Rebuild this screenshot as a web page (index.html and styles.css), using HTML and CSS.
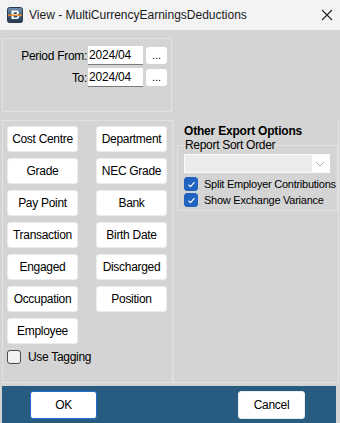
FILE: index.html
```html
<!DOCTYPE html>
<html lang="en">
<head>
  <meta charset="UTF-8">
  <title>View - MultiCurrencyEarningsDeductions</title>
  <link rel="stylesheet" href="styles.css">
</head>
<body>

<div class="window">
  <div class="titlebar">
    <svg class="app-icon" width="16" height="16" viewBox="0 0 16 16">
      <defs>
        <linearGradient id="ig" x1="0" y1="0" x2="0" y2="1">
          <stop offset="0" stop-color="#6f8fb0"/>
          <stop offset="1" stop-color="#23364d"/>
        </linearGradient>
      </defs>
      <rect x="0.5" y="0.5" width="15" height="15" rx="2" fill="url(#ig)" stroke="#2a3a4c"/>
      <path d="M4.5 3.5h5.2c1.6 0 2.3 1 2.3 2 0 1-0.6 1.6-1.4 1.9 1 0.2 1.7 1 1.7 2.1 0 1.4-1 2.5-2.6 2.5H4.5z" fill="#fff"/>
      <path d="M6.6 5.3h2.7c0.6 0 0.9 0.3 0.9 0.8s-0.3 0.8-0.9 0.8H6.6zM6.6 8.6h2.9c0.6 0 1 0.4 1 0.9s-0.4 0.9-1 0.9H6.6z" fill="#3b5675"/>
      <path d="M1 8.2h14" stroke="#f08a1c" stroke-width="1.4"/>
    </svg>
    <span class="title">View - MultiCurrencyEarningsDeductions</span>
    <svg class="close" width="12" height="12" viewBox="0 0 12 12">
      <path d="M1 1L11 11M11 1L1 11" stroke="#222" stroke-width="1.1"/>
    </svg>
  </div>

  <div class="body">
    <div class="period-box">
      <div class="period-row">
        <label class="period-label">Period From:</label>
        <div class="textbox">2024/04</div>
        <button class="dots">...</button>
      </div>
      <div class="period-row">
        <label class="period-label">To:</label>
        <div class="textbox">2024/04</div>
        <button class="dots">...</button>
      </div>
    </div>

    <div class="columns">
      <div class="group-box left">
        <div class="btn-grid">
          <button class="win-btn">Cost Centre</button>
          <button class="win-btn">Department</button>
          <button class="win-btn">Grade</button>
          <button class="win-btn">NEC Grade</button>
          <button class="win-btn">Pay Point</button>
          <button class="win-btn">Bank</button>
          <button class="win-btn">Transaction</button>
          <button class="win-btn">Birth Date</button>
          <button class="win-btn">Engaged</button>
          <button class="win-btn">Discharged</button>
          <button class="win-btn">Occupation</button>
          <button class="win-btn">Position</button>
          <button class="win-btn">Employee</button>
        </div>
        <div class="check-row tagging">
          <span class="check"></span>
          <span>Use Tagging</span>
        </div>
      </div>

      <div class="group-box right">
        <div class="heading">Other Export Options</div>
        <fieldset class="sort-box">
          <legend>Report Sort Order</legend>
          <div class="combo">
            <svg width="10" height="6" viewBox="0 0 10 6"><path d="M1 1l4 4 4-4" fill="none" stroke="#a9a9a9"/></svg>
          </div>
          <div class="check-row small">
            <span class="check checked"><svg width="9" height="9" viewBox="0 0 9 9"><path d="M1.5 4.6l2 2 4-4.4" fill="none" stroke="#fff" stroke-width="1.2"/></svg></span>
            <span>Split Employer Contributions</span>
          </div>
          <div class="check-row small">
            <span class="check checked"><svg width="9" height="9" viewBox="0 0 9 9"><path d="M1.5 4.6l2 2 4-4.4" fill="none" stroke="#fff" stroke-width="1.2"/></svg></span>
            <span>Show Exchange Variance</span>
          </div>
        </fieldset>
      </div>
    </div>

    <div class="footer">
      <button class="win-btn footer-btn ok">OK</button>
      <button class="win-btn footer-btn">Cancel</button>
    </div>
  </div>
</div>

</body>
</html>
```

FILE: styles.css
```css
body {
  margin: 0;
  font-family: 'Liberation Sans', Arial, sans-serif;
  font-size: 11px;
  color: #000;
  background: #d4d4d4;
  overflow: hidden;
}

.window {
  width: 340px;
  height: 423px;
  display: flex;
  flex-direction: column;
}

.titlebar {
  height: 30px;
  background: #f3f3f3;
  display: flex;
  align-items: center;
  padding: 0 7px;
  box-sizing: border-box;
  flex-shrink: 0;
}

.app-icon { margin-right: 6px; }

.title {
  font-size: 12px;
  color: #1a1a1a;
  flex: 1;
}

.body {
  flex: 1;
  background: #d4d4d4;
  display: flex;
  flex-direction: column;
  padding-top: 8px;
}

.period-box {
  margin-left: 2px;
  width: 170px;
  height: 74px;
  box-sizing: border-box;
  border: 1px solid #e2e2e2;
  padding-top: 7px;
}

.period-row {
  display: flex;
  align-items: center;
  height: 19px;
  margin-bottom: 3px;
}

.period-label {
  width: 84px;
  text-align: right;
  font-size: 12px;
  letter-spacing: -0.3px;
  padding-right: 1px;
}

.textbox {
  width: 55px;
  height: 19px;
  box-sizing: border-box;
  background: #fff;
  border-bottom: 1px solid #7a7a7a;
  font-size: 12px;
  padding: 2px 0 0 1px;
  letter-spacing: -0.2px;
}

.dots {
  margin-left: 3px;
  width: 21px;
  height: 17px;
  border: none;
  border-radius: 3px;
  background: #fff;
  font-family: inherit;
  font-size: 11px;
  padding: 0;
  line-height: 17px;
}

.columns {
  display: flex;
  margin-top: 8px;
  height: 263px;
}

.group-box {
  box-sizing: border-box;
  border: 1px solid #e2e2e2;
}

.group-box.left {
  margin-left: 2px;
  width: 171px;
  padding: 5px 0 0 4px;
}

.group-box.right {
  width: 166px;
  border-top: none;
  border-left-color: #dcdcdc;
  padding: 4px 0 0 3px;
}

.btn-grid {
  display: grid;
  grid-template-columns: 71px 71px;
  column-gap: 18px;
  row-gap: 6px;
}

.win-btn {
  height: 26px;
  background: #fff;
  border: 1px solid #ececec;
  border-radius: 3px;
  font-family: inherit;
  font-size: 12px;
  letter-spacing: -0.3px;
  color: #000;
  padding: 0;
}

.check-row {
  display: flex;
  align-items: center;
  gap: 6px;
  font-size: 12px;
  letter-spacing: -0.3px;
  height: 16px;
  white-space: nowrap;
}

.check-row.small {
  font-size: 11px;
  letter-spacing: -0.25px;
}

.tagging {
  margin-top: 5px;
  gap: 7px;
}

.check {
  flex-shrink: 0;
  width: 12px;
  height: 12px;
  border: 1px solid #4a4a4a;
  border-radius: 3px;
  background: #f2f2f2;
  display: flex;
  align-items: center;
  justify-content: center;
}

.check.checked {
  background: #1f62c0;
  border-color: #1f62c0;
}

.heading {
  font-weight: bold;
  font-size: 12px;
  letter-spacing: -0.2px;
  padding-left: 7px;
  margin-bottom: 1px;
}

.sort-box {
  margin: 0;
  min-width: 0;
  border: 1px solid #e2e2e2;
  padding: 3px 7px 2px 6px;
}

.sort-box legend {
  font-size: 12px;
  letter-spacing: -0.3px;
  padding: 0;
  margin-left: 1px;
  line-height: 12px;
}

.combo {
  height: 19px;
  box-sizing: border-box;
  border: 1px solid #fafafa;
  border-right-width: 0;
  display: flex;
  align-items: center;
  justify-content: flex-end;
  padding-right: 5px;
  margin-bottom: 3px;
  background: linear-gradient(to left, #fff 18px, #ececec 18px);
}

.footer {
  margin: auto 4px 0 2px;
  height: 37px;
  background: #285b80;
  display: flex;
  justify-content: space-between;
  align-items: center;
  padding: 0 31px 0 28px;
}

.footer-btn {
  width: 67px;
  height: 28px;
}

.footer-btn.ok {
  border: 1px solid #1f6fd0;
}
```
